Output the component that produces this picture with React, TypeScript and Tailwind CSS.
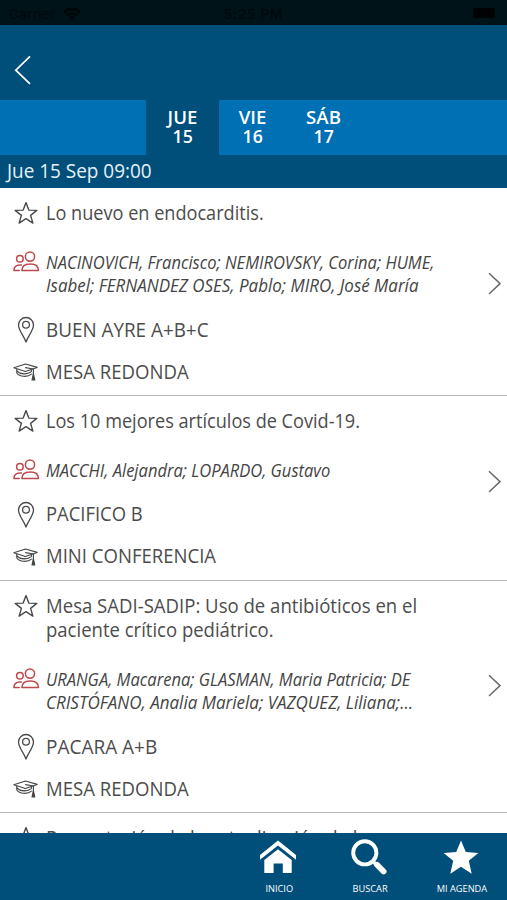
import React from 'react';
import clsx from 'clsx';

interface Line {
  text: string;
  fit: string;
}

interface Session {
  title: Line[];
  speakers: Line[];
  room?: Line;
  kind?: Line;
  arrowClass: string;
}

const sessions: Session[] = [
  {
    title: [{ text: 'Lo nuevo en endocarditis.', fit: 'scale-x-[0.94]' }],
    speakers: [
      { text: 'NACINOVICH, Francisco; NEMIROVSKY, Corina; HUME,', fit: 'scale-x-[0.957]' },
      { text: 'Isabel; FERNANDEZ OSES, Pablo; MIRO, José María', fit: 'scale-x-[0.982]' },
    ],
    room: { text: 'BUEN AYRE A+B+C', fit: 'scale-x-[0.978]' },
    kind: { text: 'MESA REDONDA', fit: 'scale-x-[0.963]' },
    arrowClass: 'mb-[18px]',
  },
  {
    title: [{ text: 'Los 10 mejores artículos de Covid-19.', fit: 'scale-x-[0.94]' }],
    speakers: [{ text: 'MACCHI, Alejandra; LOPARDO, Gustavo', fit: 'scale-x-[0.957]' }],
    room: { text: 'PACIFICO B', fit: 'scale-x-[0.955]' },
    kind: { text: 'MINI CONFERENCIA', fit: 'scale-x-[0.962]' },
    arrowClass: 'mb-[14px]',
  },
  {
    title: [
      { text: 'Mesa SADI-SADIP: Uso de antibióticos en el', fit: 'scale-x-[0.963]' },
      { text: 'paciente crítico pediátrico.', fit: 'scale-x-[0.96]' },
    ],
    speakers: [
      { text: 'URANGA, Macarena; GLASMAN, Maria Patricia; DE', fit: 'scale-x-[0.958]' },
      { text: 'CRISTÓFANO, Analia Mariela; VAZQUEZ, Liliana;…', fit: 'scale-x-[0.984]' },
    ],
    room: { text: 'PACARA A+B', fit: 'scale-x-[0.985]' },
    kind: { text: 'MESA REDONDA', fit: 'scale-x-[0.963]' },
    arrowClass: 'mb-[23px]',
  },
  {
    title: [{ text: 'Presentación de la actualización de la', fit: 'scale-x-[0.96]' }],
    speakers: [],
    arrowClass: 'hidden',
  },
];

const days = [
  { name: 'JUE', num: '15', className: 'w-[73px] bg-[#004e7a]' },
  { name: 'VIE', num: '16', className: 'w-[67px]' },
  { name: 'SÁB', num: '17', className: 'w-[75px]' },
];

const StarIcon = () => (
  <svg viewBox="0 0 26 24" className="w-[26px] h-6" fill="none" stroke="#4a4a4a" strokeWidth="1.4" strokeLinejoin="round">
    <path d="M13 1.6 L15.8 9.1 L23.8 9.4 L17.6 14.4 L19.9 22.1 L13 17.7 L6.1 22.1 L8.4 14.4 L2.2 9.4 L10.2 9.1 Z" />
  </svg>
);

const PeopleIcon = () => (
  <svg viewBox="0 0 27 22" className="w-[27px] h-[22px]" fill="none" stroke="#c2474b" strokeWidth="1.5" strokeLinejoin="round" strokeLinecap="round">
    <circle cx="17" cy="5.6" r="4.6" />
    <path d="M8.9 19.4 C8.9 15 12.3 12.9 17.2 12.9 C22.1 12.9 25.5 15 25.5 19.4 Z" />
    <circle cx="6.9" cy="7.8" r="3.3" />
    <path d="M6.2 19.4 H0.9 C0.9 16 3.2 14 6.9 13.9 H8.4" />
  </svg>
);

const PinIcon = () => (
  <svg viewBox="0 0 18 28" className="w-[18px] h-7" fill="none" stroke="#4a4a4a" strokeWidth="1.3" strokeLinejoin="round">
    <path d="M9 26 C7.4 20.6 1.5 14.6 1.5 9 A7.5 7.5 0 0 1 16.5 9 C16.5 14.6 10.6 20.6 9 26 Z" />
    <circle cx="9" cy="8.8" r="3.4" />
  </svg>
);

const CapIcon = () => (
  <svg viewBox="0 0 26 18" className="w-[26px] h-[18px]" fill="none" stroke="#454545" strokeWidth="1.1" strokeLinejoin="round" strokeLinecap="round">
    <path d="M0.8 4.8 L12.6 1 L24.2 4.4 L12.4 8.6 Z" />
    <path d="M3.8 6.2 V10 C6.5 13.9 14.5 14.5 18.4 11.2" />
    <path d="M3.8 8 C7.5 11.6 14.5 11.8 18.4 8.6 V7.2" />
    <path d="M12.6 4.6 L20.4 6 V11.6" />
    <path d="M20.4 10.6 L19 17 H21.8 Z" fill="#454545" />
  </svg>
);

const ListText: React.FC<{ line: Line }> = ({ line }) => (
  <div className={clsx('whitespace-nowrap origin-left', line.fit)}>{line.text}</div>
);

const SessionItem: React.FC<{ session: Session }> = ({ session }) => (
  <div className="flex items-center border-b border-[#b9b9b9] shrink-0 text-[19.3px] text-[#4c4c4c]">
    <div className="flex-1 pt-[13px] pb-[2px]">
      <div className="flex">
        <div className="w-[46px] pl-[13px] shrink-0">
          <StarIcon />
        </div>
        <div className="leading-[24.5px]">
          {session.title.map(line => (
            <ListText key={line.text} line={line} />
          ))}
        </div>
      </div>

      {session.speakers.length > 0 && (
        <div className="flex mt-[25px]">
          <div className="w-[46px] pl-[13px] shrink-0">
            <PeopleIcon />
          </div>
          <div className="text-[17.3px] leading-[23.5px] italic text-[#444444]">
            {session.speakers.map(line => (
              <ListText key={line.text} line={line} />
            ))}
          </div>
        </div>
      )}
      {session.room && (
        <div className="flex items-center h-[42px] mt-[11.5px]">
          <div className="w-[46px] pl-[17px] shrink-0">
            <PinIcon />
          </div>
          <ListText line={session.room} />
        </div>
      )}
      {session.kind && (
        <div className="flex items-center h-[42px]">
          <div className="w-[46px] pl-[13px] shrink-0">
            <CapIcon />
          </div>
          <ListText line={session.kind} />
        </div>
      )}
    </div>
    <div className={session.arrowClass}>
      <svg viewBox="0 0 14 24" className="w-[14px] h-6 mr-[6px]" fill="none" stroke="#6a6a6a" strokeWidth="1.5">
        <path d="M2 2.2 L13 12.6 L2 23" />
      </svg>
    </div>
  </div>
);

const App: React.FC = () => {
  return (
    <div className="w-[507px] h-[900px] flex flex-col overflow-hidden bg-white font-['Open_Sans',sans-serif]">
      {/* Status bar */}
      <div className="h-[25px] shrink-0 bg-[#001318] text-[#00080b] grid grid-cols-3 items-center px-[9px] text-[13.5px] font-['Inter',sans-serif]">
        <div className="flex items-center gap-2 pt-[3px]">
          <span className="tracking-[0.3px]">Carrier</span>
          <svg viewBox="0 0 18 14" className="w-[18px] h-[14px]" fill="none" stroke="#000507" strokeWidth="2.6">
            <path d="M1 5.2 C5.5 0.8 12.5 0.8 17 5.2" />
            <path d="M4 8.4 C7 5.6 11 5.6 14 8.4" />
            <path d="M6.8 10.4 C8.2 9.2 9.8 9.2 11.2 10.4 L9 12.8 Z" fill="#000507" strokeWidth="0.5" />
          </svg>
        </div>
        <span className="text-center pt-[3px] font-medium tracking-[0.8px]">5:25 PM</span>
        <div className="flex justify-end">
          <div className="w-[22px] h-[10px] rounded-[2px] bg-[#000203] mr-[3px] mt-px" />
        </div>
      </div>

      {/* Header */}
      <div className="h-[75px] shrink-0 bg-[#004e7a] flex items-center pl-[14px] pt-[15px]">
        <svg viewBox="0 0 18 30" className="w-[18px] h-[30px]" fill="none" stroke="#ffffff" strokeWidth="1.7">
          <path d="M16 1.4 L1.8 15.2 L16 28.8" />
        </svg>
      </div>

      {/* Day tabs */}
      <div className="h-[55px] shrink-0 bg-[#0070b5] flex pl-[146px]">
        {days.map(day => (
          <div
            key={day.name}
            className={clsx(
              'flex flex-col items-center justify-center pb-[3px] text-white text-[18.6px] leading-[19.5px] font-semibold',
              day.className
            )}
          >
            <span>{day.name}</span>
            <span className="scale-x-[0.95]">{day.num}</span>
          </div>
        ))}
      </div>

      <div className="h-[33px] shrink-0 bg-[#004e7a] flex items-center pl-[7px] text-[19.3px] text-[#e6f1f8]">
        <span className="origin-left scale-x-[0.982]">Jue 15 Sep 09:00</span>
      </div>

      {/* Sessions */}
      <div className="flex-1 min-h-0 overflow-hidden flex flex-col">
        {sessions.map(session => (
          <SessionItem key={session.title[0].text} session={session} />
        ))}
      </div>

      {/* Bottom nav */}
      <div className="h-[67px] shrink-0 bg-[#004e7a] flex justify-end text-white">
        <div className="w-[91px] flex flex-col items-center pt-[5px]">
          <svg viewBox="0 0 38 38" className="w-[38px] h-[38px] mr-[3px]" fill="#ffffff">
            <path d="M19 2.6 L37 17 V21.8 L19 7.6 L1 21.8 V17 Z" />
            <path d="M19 11.2 L32.7 22 V35 H23.8 V25.6 H14.6 V35 H5.3 V22 Z" />
          </svg>
          <span className="text-[9.5px] leading-3 mt-[7px] scale-x-[0.97]">INICIO</span>
        </div>
        <div className="w-[91px] flex flex-col items-center pt-[5px]">
          <svg viewBox="0 0 38 38" className="w-[38px] h-[38px] mr-[3px]" fill="none" stroke="#ffffff">
            <circle cx="14.8" cy="14.8" r="11.6" strokeWidth="3.9" />
            <path d="M23 23.5 L26.5 27" strokeWidth="3.5" />
            <path d="M27 26.8 L33.6 33.5" strokeWidth="5.8" strokeLinecap="round" />
          </svg>
          <span className="text-[9.5px] leading-3 mt-[7px] scale-x-[0.97]">BUSCAR</span>
        </div>
        <div className="w-[91px] flex flex-col items-center pt-[5px]">
          <svg viewBox="0 0 38 38" className="w-[38px] h-[38px] mr-[2px]" fill="#ffffff">
            <path d="M19 2.6 L23.8 14 L36.4 14.9 L26.8 22.8 L29.7 35.8 L19 28.8 L8.3 35.8 L11.2 22.8 L1.6 14.9 L14.2 14 Z" />
          </svg>
          <span className="text-[9.5px] leading-3 mt-[7px] scale-x-[0.97]">MI AGENDA</span>
        </div>
      </div>
    </div>
  );
};

export default App;
